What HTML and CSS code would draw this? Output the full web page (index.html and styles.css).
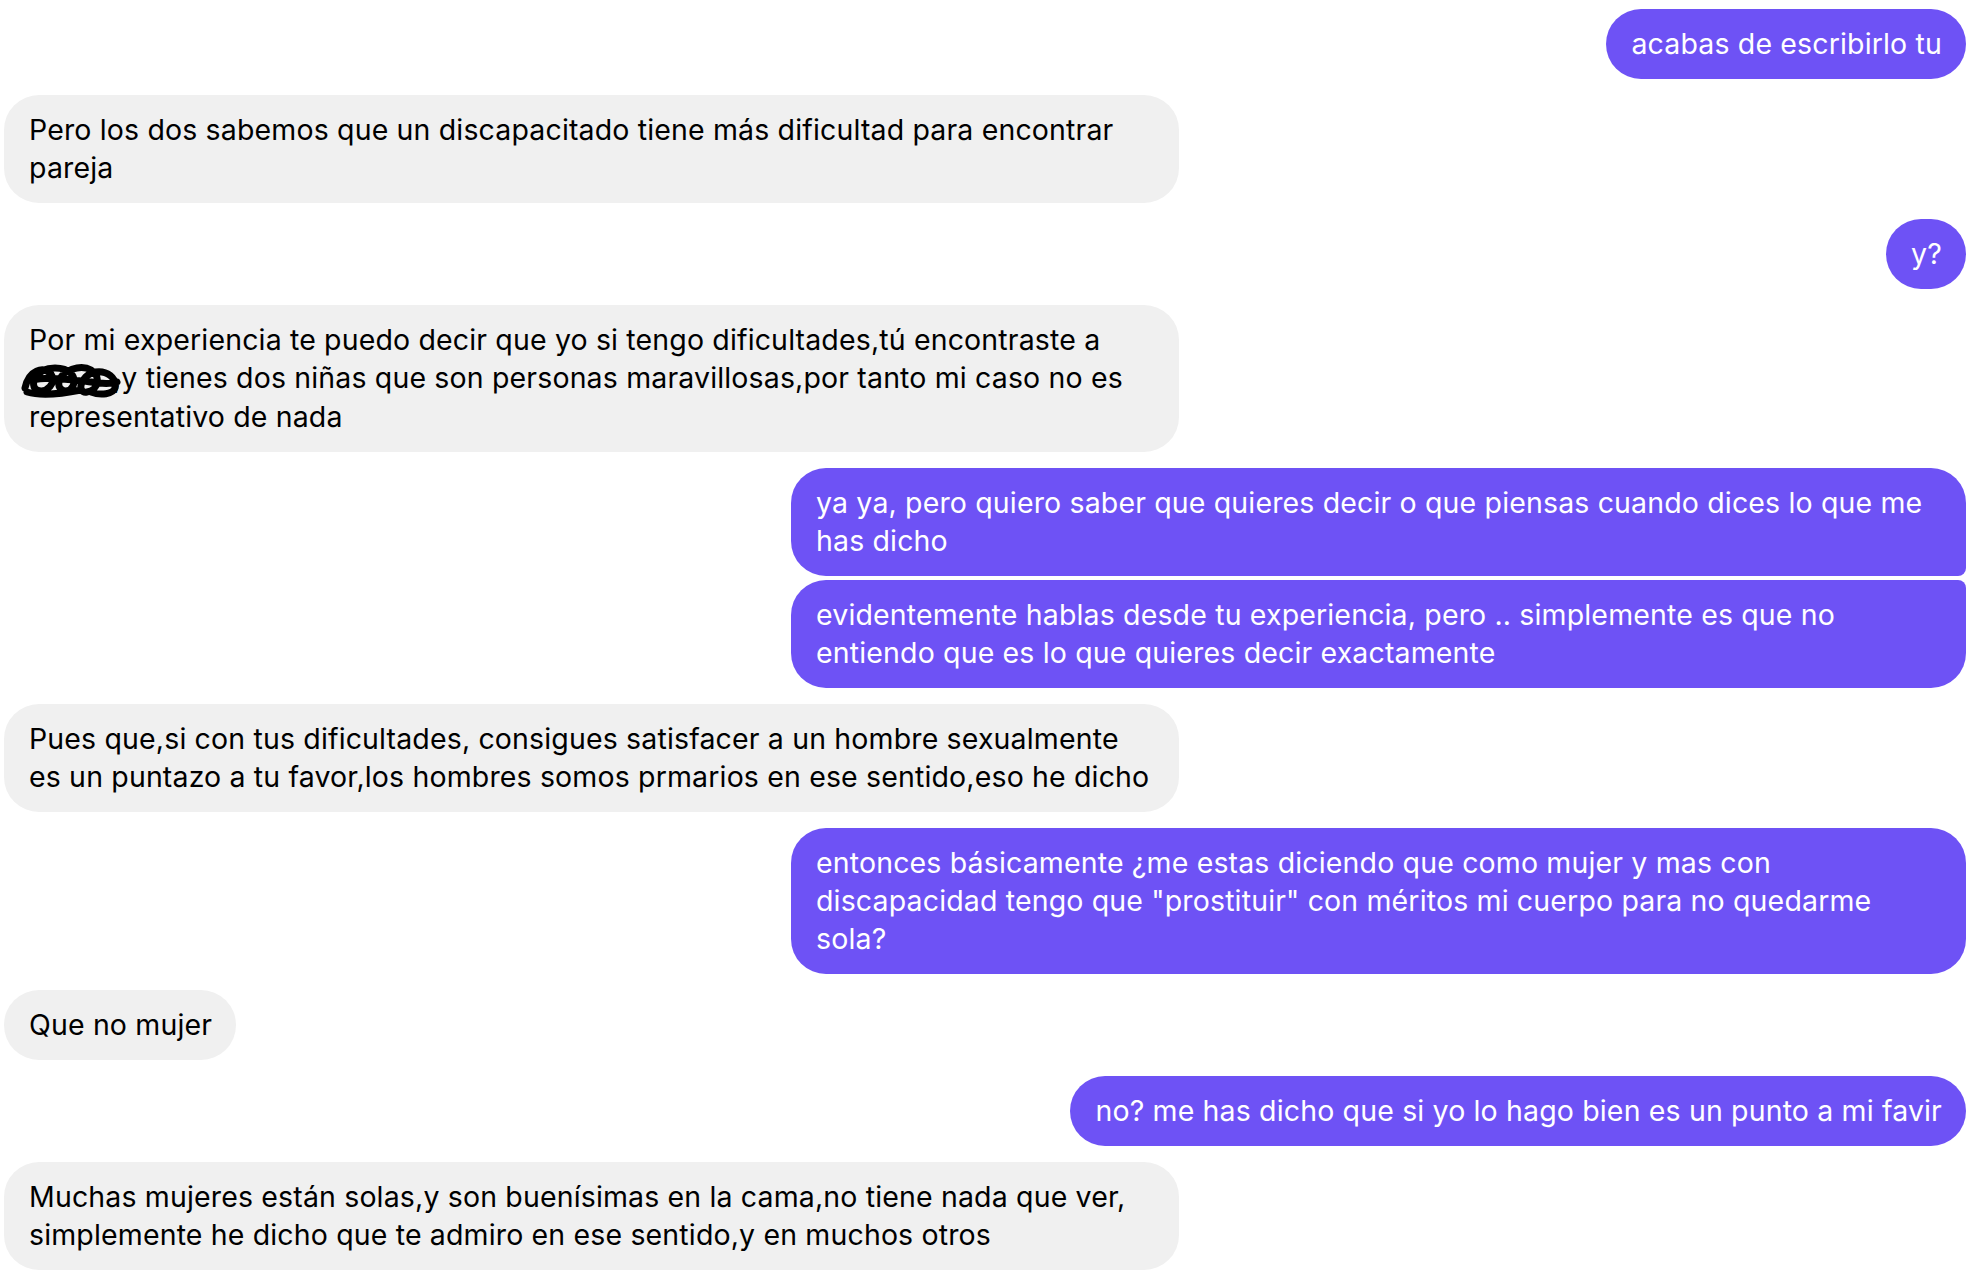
FILE: index.html
```html
<!DOCTYPE html>
<html>
<head>
    <title>Chat</title>
    <link rel="stylesheet" href="styles.css">
</head>
<body>
    <div class="chat">
        <div class="bubble me">acabas de escribirlo tu</div>

        <div class="bubble them wide">Pero los dos sabemos que un discapacitado tiene más dificultad para encontrar<br>pareja</div>

        <div class="bubble me">y?</div>

        <div class="bubble them wide">Por mi experiencia te puedo decir que yo si tengo dificultades,tú encontraste a<br><svg class="scribble" viewBox="0 0 100 36" width="100" height="36"><path d="M4 26 C8 8, 22 4, 30 12 C36 20, 26 32, 16 28 C8 24, 14 6, 34 6 C48 6, 56 14, 52 24 C48 32, 36 30, 38 20 C40 8, 60 2, 70 8 C80 14, 78 28, 66 30 C56 32, 58 14, 74 10 C86 8, 96 16, 94 26 C92 32, 80 34, 70 30 M6 30 C20 34, 40 32, 60 28 M10 18 C30 14, 50 18, 70 20 C82 22, 90 22, 96 20" /></svg>,y tienes dos niñas que son personas maravillosas,por tanto mi caso no es<br>representativo de nada</div>

        <div class="group">
            <div class="bubble me wide first">ya ya, pero quiero saber que quieres decir o que piensas cuando dices lo que me<br>has dicho</div>
            <div class="bubble me wide last">evidentemente hablas desde tu experiencia, pero .. simplemente es que no<br>entiendo que es lo que quieres decir exactamente</div>
        </div>

        <div class="bubble them wide">Pues que,si con tus dificultades, consigues satisfacer a un hombre sexualmente<br>es un puntazo a tu favor,los hombres somos prmarios en ese sentido,eso he dicho</div>

        <div class="bubble me wide">entonces básicamente ¿me estas diciendo que como mujer y mas con<br>discapacidad tengo que "prostituir" con méritos mi cuerpo para no quedarme<br>sola?</div>

        <div class="bubble them">Que no mujer</div>

        <div class="bubble me">no? me has dicho que si yo lo hago bien es un punto a mi favir</div>

        <div class="bubble them wide">Muchas mujeres están solas,y son buenísimas en la cama,no tiene nada que ver,<br>simplemente he dicho que te admiro en ese sentido,y en muchos otros</div>
    </div>
</body>
</html>
```

FILE: styles.css
```css
body {
    margin: 0;
    background-color: #ffffff;
    font-family: "Inter", "Noto Sans", sans-serif;
}

.chat {
    display: flex;
    flex-direction: column;
    gap: 16px;
    padding: 9px 6px 0 4px;
}

.group {
    display: flex;
    flex-direction: column;
    align-items: flex-end;
    gap: 4px;
}

.bubble {
    box-sizing: border-box;
    max-width: 1175px;
    padding: 16px 24px 16px 25px;
    border-radius: 35px;
    font-size: 28.5px;
    letter-spacing: 0.15px;
    line-height: 38px;
    white-space: nowrap;
}

.wide {
    width: 1175px;
}

.them {
    align-self: flex-start;
    background-color: #f0f0f0;
    color: #000000;
}

.me {
    align-self: flex-end;
    background-color: #6e52f5;
    color: #ffffff;
}

.first {
    border-bottom-right-radius: 8px;
}

.last {
    border-top-right-radius: 8px;
}

.scribble {
    display: inline-block;
    vertical-align: -10px;
    margin-left: -8px;
    margin-right: -8px;
}

.scribble path {
    fill: none;
    stroke: #000000;
    stroke-width: 7;
    stroke-linecap: round;
}
```
